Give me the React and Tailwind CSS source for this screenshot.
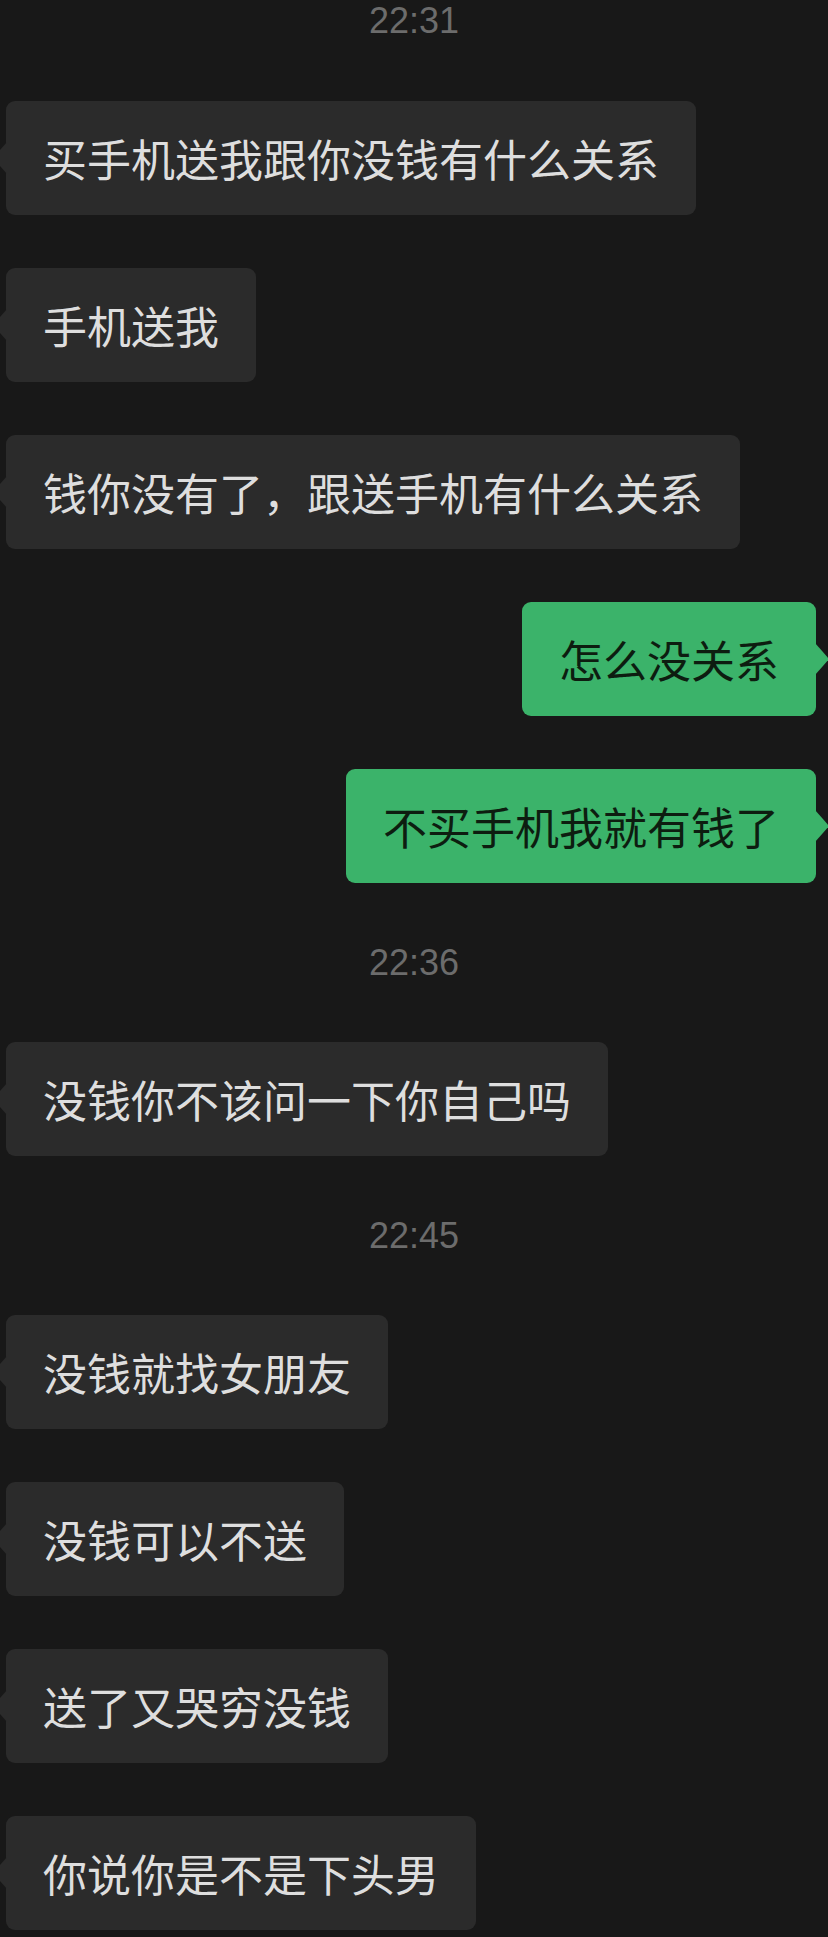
import React from "react";

// chat log, grouped under their timestamps
const groups = [
  {
    time: "22:31",
    messages: [
      { me: false, text: "买手机送我跟你没钱有什么关系" },
      { me: false, text: "手机送我" },
      { me: false, text: "钱你没有了，跟送手机有什么关系" },
      { me: true, text: "怎么没关系" },
      { me: true, text: "不买手机我就有钱了" },
    ],
  },
  {
    time: "22:36",
    messages: [{ me: false, text: "没钱你不该问一下你自己吗" }],
  },
  {
    time: "22:45",
    messages: [
      { me: false, text: "没钱就找女朋友" },
      { me: false, text: "没钱可以不送" },
      { me: false, text: "送了又哭穷没钱" },
      { me: false, text: "你说你是不是下头男" },
    ],
  },
];

function Bubble({ me, text }) {
  return (
    <div className={me ? "flex justify-end pr-[12px]" : "flex justify-start pl-[6px]"}>
      <div
        className={
          "relative rounded-[9px] px-[37px] py-[29px] text-[44px] leading-[56px] whitespace-nowrap " +
          (me ? "bg-[#3bb36a] text-[#0d1d10]" : "bg-[#2b2b2b] text-[#dedede]")
        }
      >
        {text}
        {/* little tail pointing at the sender */}
        {me ? (
          <span className="absolute top-1/2 -translate-y-1/2 right-[-13px] w-0 h-0 border-y-[16px] border-y-transparent border-l-[14px] border-l-[#3bb36a]" />
        ) : (
          <span className="absolute top-1/2 -translate-y-1/2 left-[-13px] w-0 h-0 border-y-[16px] border-y-transparent border-r-[14px] border-r-[#2b2b2b]" />
        )}
      </div>
    </div>
  );
}

export default function App() {
  return (
    <div
      className="w-[828px] min-h-[1937px] bg-[#181818] overflow-hidden pb-[6px]"
      style={{ fontFamily: '"Noto Sans CJK SC", "Noto Sans", sans-serif' }}
    >
      {groups.map((g, i) => (
        <div key={g.time}>
          <div
            className={
              "flex justify-center text-[36px] leading-[36px] text-[#6c6c6c] " +
              (i === 0 ? "h-[101px] items-start pt-[3px]" : "h-[159px] items-center")
            }
            style={{ fontFamily: '"Liberation Sans", Arial, sans-serif' }}
          >
            {g.time}
          </div>
          <div className="flex flex-col gap-[53px]">
            {g.messages.map((m, j) => (
              <Bubble key={j} me={m.me} text={m.text} />
            ))}
          </div>
        </div>
      ))}
    </div>
  );
}
